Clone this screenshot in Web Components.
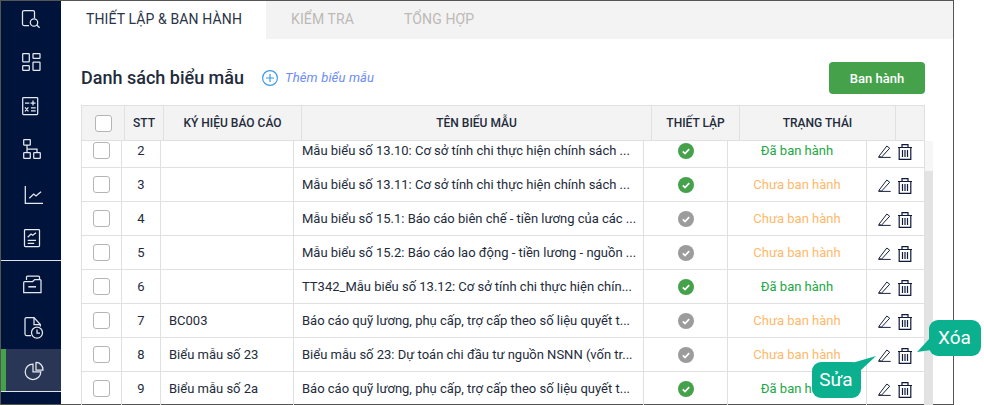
<!DOCTYPE html>
<html lang="vi">
<head>
<meta charset="utf-8">
<title>Danh sách biểu mẫu</title>
<style>
  html, body { margin: 0; padding: 0; background: #fff; }
  body { width: 984px; height: 405px; overflow: hidden; font-family: Roboto, "Liberation Sans", sans-serif; color: #1d2b45; }
</style>
</head>
<body>
<app-shell>
  <side-nav slot="nav"></side-nav>
  <tab-bar slot="tabs"></tab-bar>
  <list-header slot="head"></list-header>
  <report-table slot="table"></report-table>
</app-shell>

<script>
const bodyColumns = "40px 39px 133px 350px 84px 139px 58px";
const headColumns = "43px 39px 138px 350px 88px 156px 29px";

// top and height are the page y of each item, the paths use page coordinates too
const navItems = [
  { top: 1, h: 43, d: `<path d="M28 25.500H23a1.500 1.500 0 0 1-1.500-1.500V12a1.500 1.500 0 0 1 1.500-1.500h9a1.500 1.500 0 0 1 1.500 1.500V18"/><circle cx="33" cy="22.500" r="3.700"/><path d="M35.800 25l2.800 2.800"/>` },
  { top: 44, h: 43, d: `<rect x="21.700" y="53.500" width="6.600" height="8.300" rx=".6"/><rect x="21.700" y="65.700" width="6.600" height="4.600" rx=".6"/><rect x="32" y="53.500" width="7" height="4.800" rx=".6"/><rect x="32" y="62" width="7" height="8.300" rx=".6"/>` },
  { top: 87, h: 43, d: `<rect x="21.700" y="97.500" width="15" height="17" rx=".8"/><path d="M24 103h4.300M29.500 103h5M32 100.500v5M24 107.300l3.400 4M27.400 107.300l-3.400 4M30 107.800h4.700M30 110.800h4.700"/>` },
  { top: 130, h: 43, d: `<rect x="22.700" y="139.500" width="6.600" height="5.600" rx=".6"/><rect x="22.700" y="152.700" width="6.600" height="5.600" rx=".6"/><rect x="32.700" y="152.700" width="6.600" height="5.600" rx=".6"/><path d="M26 145v7.700M26 149h10v3.700"/>` },
  { top: 173, h: 43, d: `<path d="M24.300 186v17.300H42"/><path d="M28.300 198.300l4.400-4.300 2.300 2 5-4.300"/>` },
  { top: 216, h: 44, d: `<rect x="23.500" y="229.500" width="15" height="17" rx=".8"/><path d="M26.700 237.300l3.300-3.300 1.700 1.300 3.300-2.600M26.700 240.300h8.300M26.700 243.300h6.500"/>` },
];

class SideNav extends HTMLElement {
  constructor() {
    super();
    this.attachShadow({ mode: "open" });
    const icon = (top, h, d) => `<svg width="60" height="${h}" viewBox="0 ${top} 60 ${h}">${d}</svg>`;
    this.shadowRoot.innerHTML = `
      <style>
        :host { display: flex; flex-direction: column; width: 60px; height: 100%; background: #00133a; box-sizing: border-box; }
        svg { display: block; flex: none; fill: none; stroke: #e6e9f0; stroke-width: 1.250; }
        .rule { height: 1px; background: #dfe3ea; flex: none; }
        .active { background: #2a3656; height: 42px; position: relative; flex: none; }
        .active::before { content: ""; position: absolute; left: 0; top: 0; bottom: 0; width: 5px; background: #45a24b; }
        .active svg { position: relative; }
      </style>
      ${navItems.map((n) => icon(n.top, n.h, n.d)).join("")}
      <div class="rule"></div>
      ${icon(261, 45, `<path d="M25.500 280v-3a1 1 0 0 1 1-1h11a1 1 0 0 1 1 1v3"/><path d="M22.700 292.700V282.500a1 1 0 0 1 1-1h8l2-2H39a1 1 0 0 1 1 1v12.200z"/><path d="M27.300 286.800H35" stroke-width="1.500"/>`)}
      ${icon(306, 43, `<path d="M30 335.500h-4.500a1.500 1.500 0 0 1-1.500-1.500v-15a1.500 1.500 0 0 1 1.500-1.500H33l6.300 7v2"/><path d="M33 317.500v7h6.300"/><circle cx="36" cy="332.700" r="5.500"/><path d="M36 329.500v3.500h3"/>`)}
      <div class="active">${icon(349, 42, `<path d="M32 364a7.800 7.800 0 1 0 7.800 7.800H32z"/><path d="M35 362.500a7 7 0 0 1 7 7.500h-7z"/>`)}</div>
      <div class="rule"></div>
    `;
  }
}
customElements.define("side-nav", SideNav);

class TabBar extends HTMLElement {
  constructor() {
    super();
    this.attachShadow({ mode: "open" });
    this.shadowRoot.innerHTML = `
      <style>
        :host { display: flex; height: 38px; background: #f3f3f3; font-size: 14px; white-space: nowrap; }
        div { display: flex; align-items: center; padding: 0 25px 2px; letter-spacing: .12px; color: #bdb9b6; }
        .on { background: #fff; color: #2b3447; width: 155px; }
      </style>
      <div class="on">THIẾT LẬP &amp; BAN HÀNH</div>
      <div>KIỂM TRA</div>
      <div>TỔNG HỢP</div>
    `;
  }
}
customElements.define("tab-bar", TabBar);

class ListHeader extends HTMLElement {
  constructor() {
    super();
    this.attachShadow({ mode: "open" });
    this.shadowRoot.innerHTML = `
      <style>
        :host { display: flex; align-items: center; height: 32px; margin: 23px 28px 0 20px; }
        h1 { margin: 0 0 2px; font-size: 18px; font-weight: 500; color: #232b3b; width: 181px; }
        .add { display: flex; align-items: center; gap: 7px; color: #6c8cf8; font-size: 13px; font-style: italic; letter-spacing: .15px; flex: 1; }
        .add span { margin-bottom: 2px; }
        svg { width: 16px; height: 16px; fill: none; stroke: #3d9ae8; stroke-width: 1.200; }
        button { width: 96px; height: 32px; border: 0; border-radius: 4px; background: #45a24b; color: #fff; font: 500 13px Roboto, sans-serif; }
      </style>
      <h1>Danh sách biểu mẫu</h1>
      <div class="add"><svg viewBox="0 0 16 16"><circle cx="8" cy="8" r="7.400"/><path d="M8 4v8M4 8h8"/></svg><span>Thêm biểu mẫu</span></div>
      <button>Ban hành</button>
    `;
  }
}
customElements.define("list-header", ListHeader);

const tableRows = [
  ["2", "", "Mẫu biểu số 13.10: Cơ sở tính chi thực hiện chính sách ...", true, true],
  ["3", "", "Mẫu biểu số 13.11: Cơ sở tính chi thực hiện chính sách ...", true, false],
  ["4", "", "Mẫu biểu số 15.1: Báo cáo biên chế - tiền lương của các ...", false, false],
  ["5", "", "Mẫu biểu số 15.2: Báo cáo lao động - tiền lương - nguồn ...", false, false],
  ["6", "", "TT342_Mẫu biểu số 13.12: Cơ sở tính chi thực hiện chín...", true, true],
  ["7", "BC003", "Báo cáo quỹ lương, phụ cấp, trợ cấp theo số liệu quyết t...", false, false],
  ["8", "Biểu mẫu số 23", "Biểu mẫu số 23: Dự toán chi đầu tư nguồn NSNN (vốn tr...", false, false],
  ["9", "Biểu mẫu số 2a", "Báo cáo quỹ lương, phụ cấp, trợ cấp theo số liệu quyết t...", true, true],
];

const checkIcon = (on) => `<svg class="tick" viewBox="0 0 16 16"><circle cx="8" cy="8" r="8" fill="${on ? "#45a24b" : "#9c9c9c"}"/><path d="M4.800 8.300l2.200 2.200 4.200-4.300" fill="none" stroke="#fff" stroke-width="1.700"/></svg>`;
const editIcon = `<svg class="pen" viewBox="0 0 13 13"><path d="M.8 11.500L8.800 1l2.900 2.200-8.200 9zM.3 12.400h12.400" fill="none" stroke="#1a2440" stroke-width="1"/></svg>`;
const trashIcon = `<svg class="trash" viewBox="0 0 14 16"><path d="M0 3.500h14M4 3.500V.6h6v2.900M1.200 3.500v11.800h11.600V3.500M4.500 6v7M7 6v7M9.500 6v7" fill="none" stroke="#0e1a38" stroke-width="1.200"/></svg>`;

class ReportTable extends HTMLElement {
  constructor() {
    super();
    this.attachShadow({ mode: "open" });
    const head = ["", "STT", "KÝ HIỆU BÁO CÁO", "TÊN BIỂU MẪU", "THIẾT LẬP", "TRẠNG THÁI", ""];
    const rows = tableRows.map((r) => `
      <div class="row">
        <div class="c"><span class="box"></span></div>
        <div class="c">${r[0]}</div>
        <div class="c l">${r[1]}</div>
        <div class="c l">${r[2]}</div>
        <div class="c">${checkIcon(r[3])}</div>
        <div class="c ${r[4] ? "done" : "todo"}">${r[4] ? "Đã ban hành" : "Chưa ban hành"}</div>
        <div class="c acts">${editIcon}${trashIcon}</div>
      </div>`).join("");
    this.shadowRoot.innerHTML = `
      <style>
        :host { display: block; margin: 11px 0 0 20px; width: 852px; font-size: 13px; color: #232b3b; }
        .head { display: grid; grid-template-columns: ${headColumns}; width: 844px; height: 36px; box-sizing: border-box;
                background: #f3f3f3; border: 1px solid #e0e0e0; font-weight: 500; font-size: 12px; position: relative; z-index: 1; }
        .head div { display: flex; align-items: center; justify-content: center; border-right: 1px solid #e0e0e0; box-sizing: border-box; }
        .head div:last-child { border-right: 0; }
        .wrap { display: flex; height: 264px; overflow: hidden; }
        .list { width: 844px; margin-top: -7px; }
        .row { display: grid; grid-template-columns: ${bodyColumns}; height: 34px; box-sizing: border-box; border-bottom: 1px solid #e0e0e0; border-left: 1px solid #e0e0e0; }
        .c { display: flex; align-items: center; justify-content: center; border-right: 1px solid #e0e0e0; box-sizing: border-box; white-space: nowrap; overflow: hidden; }
        .l { justify-content: flex-start; padding-left: 8px; }
        .done { color: #22a745; }
        .todo { color: #ffb86b; }
        .box { width: 17px; height: 17px; box-sizing: border-box; border: 1px solid #b5b5b5; border-radius: 3px; background: #fff; }
        .tick { width: 16px; height: 16px; display: block; }
        .acts { gap: 7px; padding-right: 2px; }
        .pen { width: 13px; height: 13px; display: block; margin-top: 2px; }
        .trash { width: 14px; height: 16px; display: block; margin-top: 3px; }
        .bar { width: 8px; background: #e3e3e3; }
        .bar::before { content: ""; display: block; height: 30px; background: #f6f6f6; }
      </style>
      <div class="head">
        <div><span class="box"></span></div>
        ${head.slice(1).map((h) => `<div>${h}</div>`).join("")}
      </div>
      <div class="wrap">
        <div class="list">${rows}</div>
        <div class="bar"></div>
      </div>
    `;
  }
}
customElements.define("report-table", ReportTable);

// Teal speech bubble drawn over the table, the tail is an svg polygon
class CallOut extends HTMLElement {
  static get observedAttributes() { return ["points"]; }
  constructor() {
    super();
    this.attachShadow({ mode: "open" });
    this.shadowRoot.innerHTML = `
      <style>
        :host { display: flex; position: absolute; align-items: center; justify-content: center; box-sizing: border-box; padding: 0 1px 2px 0;
                background: #0bb08e; color: #fff; border-radius: 9px; font-size: 19px; z-index: 3; }
        svg { position: absolute; overflow: visible; left: 0; top: 0; width: 1px; height: 1px; }
        polygon { fill: #0bb08e; }
      </style>
      <svg><polygon></polygon></svg>
      <slot></slot>
    `;
  }
  attributeChangedCallback(name, oldValue, value) {
    this.shadowRoot.querySelector("polygon").setAttribute("points", value);
  }
}
customElements.define("call-out", CallOut);

class AppShell extends HTMLElement {
  constructor() {
    super();
    this.attachShadow({ mode: "open" });
    this.shadowRoot.innerHTML = `
      <style>
        :host { display: block; position: relative; width: 984px; height: 405px; overflow: hidden; }
        .frame { display: flex; width: 954px; height: 405px; box-sizing: border-box; border: 1px solid #555; }
        .main { flex: 1; min-width: 0; }
      </style>
      <div class="frame">
        <slot name="nav"></slot>
        <div class="main">
          <slot name="tabs"></slot>
          <slot name="head"></slot>
          <slot name="table"></slot>
        </div>
      </div>
      <call-out style="left:929px;top:320px;width:52px;height:36px" points="1,18 2,30 -12,32">Xóa</call-out>
      <call-out style="left:812px;top:362px;width:49px;height:36px" points="40,1 48,9 64,-6">Sửa</call-out>
    `;
  }
}
customElements.define("app-shell", AppShell);
</script>
</body>
</html>
